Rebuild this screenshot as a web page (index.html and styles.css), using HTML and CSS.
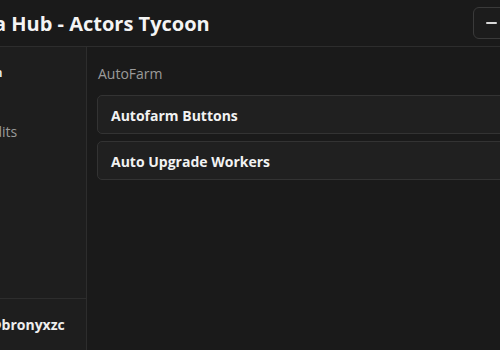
FILE: index.html
```html
<!DOCTYPE html>
<html lang="en">
<head>
  <meta charset="UTF-8" />
  <meta name="viewport" content="width=device-width, initial-scale=1.0"/>
  <title>Nova Hub - Actors Tycoon</title>
  <link rel="stylesheet" href="styles.css">
</head>
<body>
  <div class="window">
    <header class="titlebar">
      <h1 class="title">Nova Hub - Actors Tycoon</h1>
      <button class="win-btn" aria-label="Minimize"><span class="dash"></span></button>
    </header>

    <div class="main">
      <aside class="sidebar">
        <ul class="tabs">
          <li class="tab active">Main</li>
          <li class="tab">Credits</li>
        </ul>
        <div class="user">
          <span class="username">@bronyxzc</span>
        </div>
      </aside>

      <section class="content">
        <p class="section-title">AutoFarm</p>
        <button class="option">Autofarm Buttons</button>
        <button class="option">Auto Upgrade Workers</button>
      </section>
    </div>
  </div>
</body>
</html>
```

FILE: styles.css
```css
html, body {
  margin: 0;
  height: 100%;
  overflow: hidden;
}

body {
  background: #1a1a1a;
  color: #f0f0f0;
  font-family: "Open Sans", "Noto Sans", sans-serif;
}

.window {
  width: 600px;
  height: 350px;
  margin-left: -60px;
  display: flex;
  flex-direction: column;
}

.titlebar {
  height: 46px;
  flex-shrink: 0;
  display: flex;
  align-items: center;
  justify-content: space-between;
  border-bottom: 1px solid #2d2d2d;
  padding: 0 0 0 14px;
}

.title {
  margin: 0;
  font-size: 20px;
  font-weight: 700;
  color: #f4f4f4;
}

.win-btn {
  width: 36px;
  height: 32px;
  margin-right: 31px;
  background: #1c1c1c;
  border: 1px solid #3a3a3a;
  border-radius: 6px;
  display: flex;
  align-items: center;
  justify-content: center;
  padding: 0;
}

.dash {
  width: 11px;
  height: 2px;
  background: #d8d8d8;
  border-radius: 1px;
}

.main {
  flex: 1;
  display: flex;
}

.sidebar {
  width: 146px;
  flex-shrink: 0;
  background: #1e1e1e;
  border-right: 1px solid #2d2d2d;
  display: flex;
  flex-direction: column;
}

.tabs {
  list-style: none;
  margin: 0;
  padding: 16px 0 0 31px;
  flex: 1;
}

.tab {
  font-size: 14px;
  line-height: 19px;
  color: #9a9a9a;
  margin-bottom: 40px;
}

.tab.active {
  color: #f0f0f0;
  font-weight: 600;
  font-size: 13px;
}

.user {
  height: 51px;
  border-top: 1px solid #2d2d2d;
  display: flex;
  align-items: center;
  padding-left: 49px;
}

.username {
  font-size: 14px;
  font-weight: 700;
  color: #eeeeee;
}

.content {
  flex: 1;
  padding: 17px 0 0 10px;
  display: flex;
  flex-direction: column;
  gap: 7px;
}

.section-title {
  margin: 0 0 5px 1px;
  font-size: 14px;
  color: #9a9a9a;
}

.option {
  height: 39px;
  background: #202020;
  border: 1px solid #333333;
  border-radius: 5px;
  text-align: left;
  padding: 1px 13px 0;
  font-family: inherit;
  font-size: 14px;
  font-weight: 700;
  color: #f2f2f2;
}
```
